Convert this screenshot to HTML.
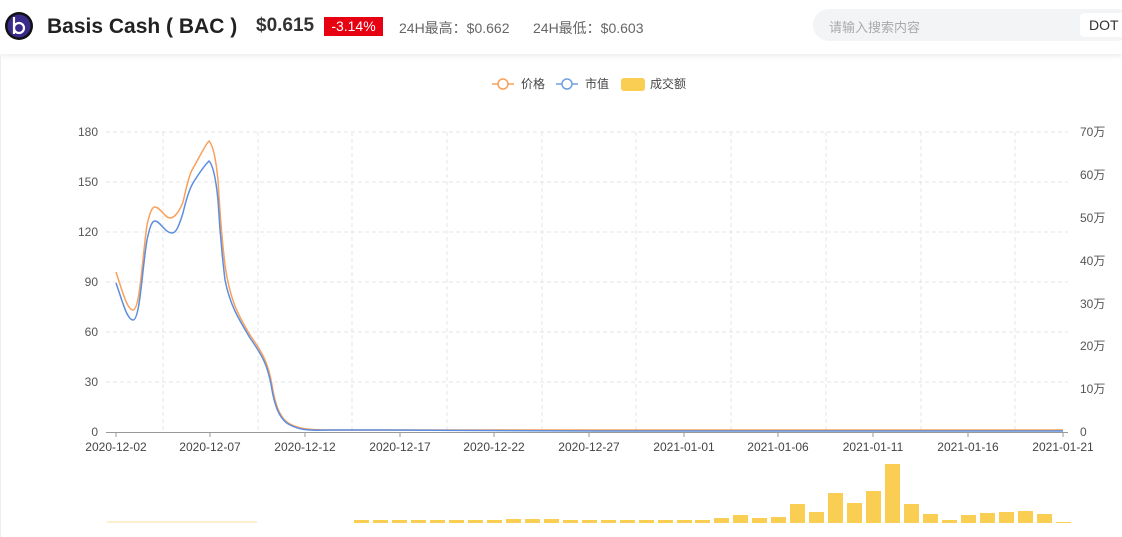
<!DOCTYPE html>
<html><head><meta charset="utf-8"><style>
body{margin:0;width:1122px;height:537px;overflow:hidden;background:#fff;font-family:"Liberation Sans","Noto Sans CJK SC",sans-serif;}
.hd{position:absolute;left:0;top:0;width:1122px;height:54px;background:#fff;box-shadow:0 2px 5px rgba(0,0,0,0.08);}
.t{position:absolute;white-space:nowrap}
</style></head><body>
<div class="hd">
<svg style="position:absolute;left:4px;top:11px" width="30" height="30" viewBox="0 0 30 30"><circle cx="15" cy="15" r="14" fill="#111"/><circle cx="15" cy="15" r="11.5" fill="#3a2a8a"/><path d="M10 6 V23 M10 17 a5 5 0 1 1 10 0 a5 5 0 1 1 -10 0" stroke="#fff" stroke-width="2.2" fill="none"/></svg>
<div class="t" style="left:47px;top:15px;font-size:21px;font-weight:bold;color:#222">Basis Cash ( BAC )</div>
<div class="t" style="left:256px;top:15px;font-size:19px;font-weight:bold;color:#333">$0.615</div>
<div class="t" style="left:324px;top:17px;width:59px;height:19px;background:#e60012;color:#fff;font-size:14px;line-height:19px;text-align:center">-3.14%</div>
<div class="t" style="left:399px;top:18px;font-size:14px;color:#666">24H最高：$0.662</div>
<div class="t" style="left:533px;top:18px;font-size:14px;color:#666">24H最低：$0.603</div>
<div class="t" style="left:813px;top:9px;width:320px;height:32px;border-radius:16px;background:#f3f4f6"></div>
<div class="t" style="left:829px;top:17px;font-size:13px;color:#aaa">请输入搜索内容</div>
<div class="t" style="left:1080px;top:13px;width:50px;height:24px;background:#fff;border-radius:4px;font-size:14px;color:#333;line-height:24px;padding-left:9px">DOT</div>
</div>
<div style="position:absolute;left:0;top:55px;width:1px;height:482px;background:#eee"></div>
<svg style="position:absolute;left:0;top:0" width="1122" height="537" font-family="Liberation Sans, Noto Sans CJK SC, sans-serif">
<g stroke="#f9a05a" stroke-width="1.5" fill="#fff"><line x1="492" y1="84" x2="514" y2="84"/><circle cx="503" cy="84" r="5"/></g>
<text x="521" y="88" font-size="12" fill="#444">价格</text>
<g stroke="#6f9fe0" stroke-width="1.5" fill="#fff"><line x1="556" y1="84" x2="578" y2="84"/><circle cx="567" cy="84" r="5"/></g>
<text x="585" y="88" font-size="12" fill="#444">市值</text>
<rect x="621" y="78" width="24" height="13" rx="3" fill="#f9ce52"/>
<text x="650" y="88" font-size="12" fill="#444">成交额</text>
<g stroke="#e4e4e4" stroke-dasharray="4,3" stroke-width="1">
<line x1="106" y1="132" x2="1068" y2="132"/><line x1="106" y1="182" x2="1068" y2="182"/><line x1="106" y1="232" x2="1068" y2="232"/><line x1="106" y1="282" x2="1068" y2="282"/><line x1="106" y1="332" x2="1068" y2="332"/><line x1="106" y1="382" x2="1068" y2="382"/>
<line x1="163" y1="132" x2="163" y2="432"/><line x1="258" y1="132" x2="258" y2="432"/><line x1="352" y1="132" x2="352" y2="432"/><line x1="447" y1="132" x2="447" y2="432"/><line x1="542" y1="132" x2="542" y2="432"/><line x1="636" y1="132" x2="636" y2="432"/><line x1="731" y1="132" x2="731" y2="432"/><line x1="826" y1="132" x2="826" y2="432"/><line x1="921" y1="132" x2="921" y2="432"/><line x1="1015" y1="132" x2="1015" y2="432"/>
</g>
<line x1="106" y1="432.5" x2="1068" y2="432.5" stroke="#999"/>
<g stroke="#999"><line x1="116" y1="432" x2="116" y2="437"/><line x1="210" y1="432" x2="210" y2="437"/><line x1="305" y1="432" x2="305" y2="437"/><line x1="400" y1="432" x2="400" y2="437"/><line x1="494" y1="432" x2="494" y2="437"/><line x1="589" y1="432" x2="589" y2="437"/><line x1="684" y1="432" x2="684" y2="437"/><line x1="778" y1="432" x2="778" y2="437"/><line x1="873" y1="432" x2="873" y2="437"/><line x1="968" y1="432" x2="968" y2="437"/><line x1="1063" y1="432" x2="1063" y2="437"/></g>
<g font-size="12" fill="#555" text-anchor="end"><text x="98" y="136">180</text><text x="98" y="186">150</text><text x="98" y="236">120</text><text x="98" y="286">90</text><text x="98" y="336">60</text><text x="98" y="386">30</text><text x="98" y="436">0</text></g>
<g font-size="12" fill="#555"><text x="1080" y="136">70万</text><text x="1080" y="179">60万</text><text x="1080" y="222">50万</text><text x="1080" y="265">40万</text><text x="1080" y="308">30万</text><text x="1080" y="350">20万</text><text x="1080" y="393">10万</text><text x="1080" y="436">0</text></g>
<g font-size="12" fill="#444" text-anchor="middle"><text x="116" y="451">2020-12-02</text><text x="210" y="451">2020-12-07</text><text x="305" y="451">2020-12-12</text><text x="400" y="451">2020-12-17</text><text x="494" y="451">2020-12-22</text><text x="589" y="451">2020-12-27</text><text x="684" y="451">2021-01-01</text><text x="778" y="451">2021-01-06</text><text x="873" y="451">2021-01-11</text><text x="968" y="451">2021-01-16</text><text x="1063" y="451">2021-01-21</text></g>
<path d="M116 272 C122 290,127 310,133 310 C140 310,142 260,147 225 C150 212,152 207,155 207 C160 207,165 218,170 218 C175 218,180 210,183 202 C186 190,188 178,192 170 C198 160,205 145,209 141 C213 145,216 160,218 180 C220 215,222 240,225 265 C230 300,238 315,250 335 C262 352,268 362,272 385 C276 410,282 420,290 424 C298 428,305 430,330 430 L600 430 L1063 430" fill="none" stroke="#f9a05a" stroke-width="1.5"/>
<path d="M116 283 C122 300,127 320,133 320 C140 320,142 270,147 240 C150 226,152 221,155 221 C160 221,165 233,172 233 C177 233,180 222,183 213 C186 200,189 190,193 183 C198 175,205 165,209 161 C213 165,216 180,218 200 C220 235,222 255,225 280 C230 305,238 318,250 338 C262 355,268 365,272 390 C276 412,282 421,290 425 C298 429,305 431,330 430 L380 430 L600 431 L1063 431" fill="none" stroke="#5b8ee0" stroke-width="1.5"/>
<g fill="#fdf0cf"><rect x="107" y="521" width="150" height="2"/></g>
<g fill="#f9ce52">
<rect x="354" y="520" width="15" height="3"/><rect x="373" y="520" width="15" height="3"/><rect x="392" y="520" width="15" height="3"/><rect x="411" y="520" width="15" height="3"/><rect x="430" y="520" width="15" height="3"/><rect x="449" y="520" width="15" height="3"/><rect x="468" y="520" width="15" height="3"/><rect x="487" y="520" width="15" height="3"/><rect x="506" y="519" width="15" height="4"/><rect x="525" y="519" width="15" height="4"/><rect x="544" y="519" width="15" height="4"/><rect x="563" y="520" width="15" height="3"/><rect x="582" y="520" width="15" height="3"/><rect x="601" y="520" width="15" height="3"/><rect x="620" y="520" width="15" height="3"/><rect x="639" y="520" width="15" height="3"/><rect x="658" y="520" width="15" height="3"/><rect x="677" y="520" width="15" height="3"/><rect x="695" y="520" width="15" height="3"/>
<rect x="714" y="518" width="15" height="5"/><rect x="733" y="515" width="15" height="8"/><rect x="752" y="518" width="15" height="5"/><rect x="771" y="517" width="15" height="6"/><rect x="790" y="504" width="15" height="19"/><rect x="809" y="512" width="15" height="11"/><rect x="828" y="493" width="15" height="30"/><rect x="847" y="503" width="15" height="20"/><rect x="866" y="491" width="15" height="32"/><rect x="885" y="464" width="15" height="59"/><rect x="904" y="504" width="15" height="19"/><rect x="923" y="514" width="15" height="9"/><rect x="942" y="520" width="15" height="3"/><rect x="961" y="515" width="15" height="8"/><rect x="980" y="513" width="15" height="10"/><rect x="999" y="512" width="15" height="11"/><rect x="1018" y="511" width="15" height="12"/><rect x="1037" y="514" width="15" height="9"/><rect x="1056" y="522" width="15" height="1"/>
</g>
</svg>
</body></html>
